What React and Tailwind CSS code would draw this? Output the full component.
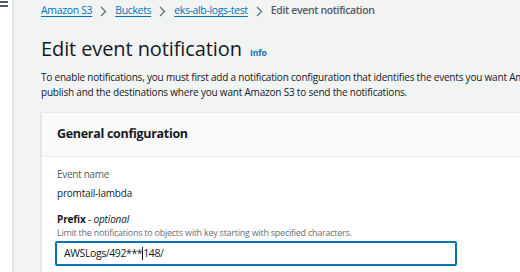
import React from 'react';

const Chevron = () => (
  <svg width="7" height="11" viewBox="0 0 7 11" className="mx-[8px] shrink-0">
    <path d="M1 1 L5.5 5.5 L1 10" fill="none" stroke="#687078" strokeWidth="1.4" />
  </svg>
);

const App = () => {
  const crumbs = ['Amazon S3', 'Buckets', 'eks-alb-logs-test'];

  return (
    <div className="flex w-[520px] h-[272px] overflow-hidden bg-[#f2f3f3] font-['Open_Sans',sans-serif] text-[#16191f]">
      {/* Side nav (collapsed) */}
      <div className="relative w-[14px] shrink-0 bg-white border-r-2 border-[#e3e6e6]">
        <div className="absolute left-0 top-[1px] w-[8px] h-[1.5px] bg-[#545b64]"></div>
        <div className="absolute left-0 top-[5px] w-[8px] h-[1.5px] bg-[#545b64]"></div>
      </div>

      {/* Main content */}
      <div className="flex-1 min-w-0 pl-[27px] pt-[2px]">
        {/* Breadcrumbs */}
        <div className="flex items-center h-[18px] text-[10.5px] tracking-[-0.35px] whitespace-nowrap">
          {crumbs.map((c) => (
            <React.Fragment key={c}>
              <span className="text-[#0073bb] underline underline-offset-2 decoration-[#0073bb]">{c}</span>
              <Chevron />
            </React.Fragment>
          ))}
          <span className="text-[#545b64] font-semibold">Edit event notification</span>
        </div>

        {/* Title */}
        <div className="flex items-baseline mt-[17px] whitespace-nowrap">
          <h1 className="text-[20px] leading-[24px] font-normal tracking-[-0.1px]">Edit event notification</h1>
          <span className="ml-[8px] text-[8.5px] font-bold text-[#0073bb]">Info</span>
        </div>

        <p className="mt-[9px] text-[10px] leading-[14.5px] tracking-[-0.2px] whitespace-nowrap">
          To enable notifications, you must first add a notification configuration that identifies the events you want Amazon S3 to
          <br />
          publish and the destinations where you want Amazon S3 to send the notifications.
        </p>

        {/* Card */}
        <div className="mt-[13px] bg-white border-l border-t border-[#e6e9e9] shadow-[0_1px_1px_0_rgba(0,28,36,0.3)] min-w-[600px]">
          <div className="h-[44px] flex items-center px-[15px] bg-[#fafafa] border-b border-[#eaeded]">
            <h2 className="text-[12.5px] font-bold tracking-[-0.3px]">General configuration</h2>
          </div>
          <div className="px-[15px] pt-[10px] pb-[12px]">
            <div className="text-[10px] leading-[14px] tracking-[-0.3px] text-[#545b64]">Event name</div>
            <div className="mt-[5px] text-[10px] leading-[14px] tracking-[-0.2px]">promtail-lambda</div>

            <div className="mt-[12px] text-[10px] leading-[14px] tracking-[-0.15px]">
              <span className="font-bold">Prefix</span> - <span className="italic">optional</span>
            </div>
            <div className="mt-[1px] text-[9px] leading-[12px] tracking-[-0.25px] text-[#687078] whitespace-nowrap">
              Limit the notifications to objects with key starting with specified characters.
            </div>
            <div className="mt-[2px] -ml-[2px] w-[402px] h-[25px] flex items-center px-[7px] border-2 border-[#0073bb] rounded-[2px] text-[10.5px] tracking-[-0.4px]">
              <span>AWSLogs/492***</span>
              <span className="w-[1px] h-[13px] bg-[#16191f]"></span>
              <span>148/</span>
            </div>
          </div>
        </div>
      </div>
    </div>
  );
};

export default App;
